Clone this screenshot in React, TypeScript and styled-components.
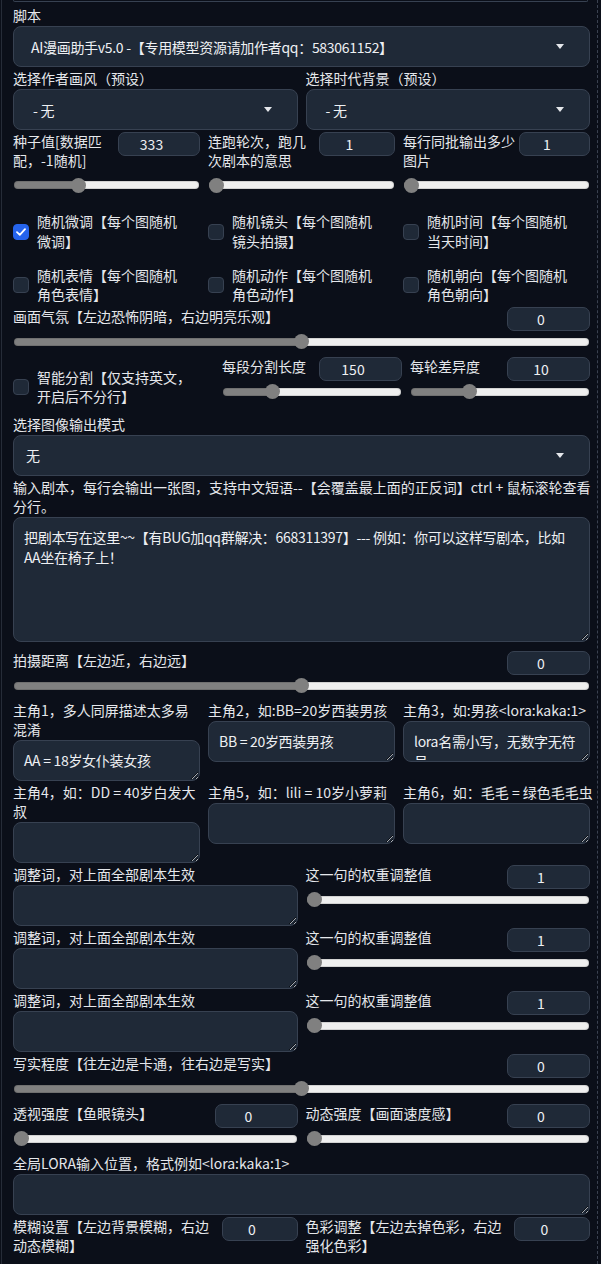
import React from "react";
import styled, { createGlobalStyle } from "styled-components";

const Global = createGlobalStyle`
  html, body { margin: 0; padding: 0; background: #0b0f19; }
  body {
    font-family: "Noto Sans CJK SC", "Noto Sans", sans-serif;
    color: #e5e7eb;
    overflow: hidden;
    font-size: 14px;
  }
  * { box-sizing: border-box; }
`;

const Page = styled.div`
  width: 597px;
  min-height: 1264px;
  margin-left: 1px;
  border-left: 1px solid #262c38;
  border-right: 1px dashed #3b4251;
  padding: 0 7px 0 11px;
  display: flex;
  flex-direction: column;
  gap: 2px;
`;

const TopEdge = styled.div`
  height: 2px;
  margin-right: 2px;
  border: 1px solid #374151;
  border-top: none;
  border-radius: 0 0 6px 6px;
`;

const Field = styled.div<{ $mt?: number }>`
  display: flex;
  flex-direction: column;
  min-width: 0;
  margin-top: ${(p) => p.$mt ?? 0}px;
`;

const Label = styled.div`
  font-size: 14px;
  line-height: 19px;
  white-space: nowrap;
  margin-bottom: 1px;
  color: #e5e7eb;
`;

const Grid = styled.div<{ $cols: string; $mt?: number }>`
  display: grid;
  grid-template-columns: ${(p) => p.$cols};
  column-gap: 8px;
  align-items: start;
  margin-top: ${(p) => p.$mt ?? 0}px;
`;

const Select = styled.div<{ $pl: number }>`
  height: 41px;
  display: flex;
  align-items: center;
  justify-content: space-between;
  padding: 0 25px 0 ${(p) => p.$pl}px;
  background: #1f2937;
  border: 1px solid #374151;
  border-radius: 8px;
  font-size: 14px;
  letter-spacing: -0.3px;
  white-space: pre;
  color: #eef0f3;
`;

const Caret = styled.span`
  width: 0;
  height: 0;
  border-left: 4px solid transparent;
  border-right: 4px solid transparent;
  border-top: 5px solid #e5e7eb;
  flex: none;
`;

const SliderHead = styled.div`
  display: flex;
  justify-content: space-between;
  align-items: flex-start;
  gap: 4px;
`;

const HeadLabel = styled.div`
  font-size: 14px;
  line-height: 19.2px;
  white-space: nowrap;
  min-width: 0;
`;

const NumberBox = styled.div<{ $w: number }>`
  flex: none;
  width: ${(p) => p.$w}px;
  height: 24px;
  background: #1f2937;
  border: 1px solid #374151;
  border-radius: 7px;
  display: flex;
  align-items: center;
  justify-content: center;
  padding: 0 15px 0 0;
  font-size: 14px;
  color: #eef0f3;
`;

const TrackArea = styled.div<{ $mt: number }>`
  height: 22px;
  margin: ${(p) => p.$mt}px 0 2px;
  display: flex;
  align-items: center;
  padding: 0 1px;
`;

const Track = styled.div<{ $pos: number }>`
  position: relative;
  flex: 1;
  height: 8px;
  border-radius: 4px;
  background: linear-gradient(
    to right,
    #808080 calc(7.5px + (100% - 15px) * ${(p) => p.$pos}),
    #efefef 0
  );
  box-shadow: inset 0 0 0 1px rgba(0, 0, 0, 0.12);
`;

const Thumb = styled.div<{ $pos: number }>`
  position: absolute;
  top: 50%;
  left: calc((100% - 15px) * ${(p) => p.$pos});
  width: 15px;
  height: 15px;
  margin-top: -7.5px;
  border-radius: 50%;
  background: #808080;
`;

const CheckItem = styled.div<{ $pt?: number }>`
  display: flex;
  align-items: center;
  gap: 8px;
  padding: ${(p) => p.$pt ?? 12}px 12px 0 0;
`;

const Box = styled.span<{ $on?: boolean }>`
  flex: none;
  width: 16px;
  height: 16px;
  border-radius: 4px;
  background: ${(p) => (p.$on ? "#2563eb" : "#1f2937")};
  border: 1px solid ${(p) => (p.$on ? "#2563eb" : "#374151")};
  display: flex;
  align-items: center;
  justify-content: center;
`;

const CheckText = styled.span`
  font-size: 14px;
  line-height: 19.6px;
  white-space: nowrap;
`;

const TextBox = styled.textarea<{ $h: number; $pr: number }>`
  display: block;
  width: 100%;
  height: ${(p) => p.$h}px;
  resize: vertical;
  overflow: hidden;
  background: #1f2937;
  border: 1px solid #374151;
  border-radius: 8px;
  color: #eef0f3;
  font-family: inherit;
  font-size: 14px;
  letter-spacing: -0.3px;
  line-height: 20px;
  padding: 9px ${(p) => p.$pr}px 9px 10px;
  margin: 0;
  color-scheme: dark;
  outline: none;
`;

type SliderProps = {
  label: React.ReactNode;
  value: string;
  pos: number;
  w?: number;
  mt?: number;
};

function SliderField({ label, value, pos, w = 83, mt = 0 }: SliderProps) {
  return (
    <Field>
      <SliderHead>
        <HeadLabel>{label}</HeadLabel>
        <NumberBox $w={w}>{value}</NumberBox>
      </SliderHead>
      <TrackArea $mt={mt}>
        <Track $pos={pos}>
          <Thumb $pos={pos} />
        </Track>
      </TrackArea>
    </Field>
  );
}

function Check({ on, children, pt }: { on?: boolean; children: React.ReactNode; pt?: number }) {
  return (
    <CheckItem $pt={pt}>
      <Box $on={on}>
        {on && (
          <svg width="10" height="8" viewBox="0 0 10 8">
            <path d="M1 4.2 L3.8 6.8 L9 1.2" fill="none" stroke="#fff" strokeWidth="1.8" strokeLinecap="round" strokeLinejoin="round" />
          </svg>
        )}
      </Box>
      <CheckText>{children}</CheckText>
    </CheckItem>
  );
}

function Dropdown({ value, pl = 13 }: { value: string; pl?: number }) {
  return (
    <Select $pl={pl}>
      <span>{value}</span>
      <Caret />
    </Select>
  );
}

function TextField({
  label,
  value = "",
  h = 41,
  pr = 4,
}: {
  label: React.ReactNode;
  value?: string;
  h?: number;
  pr?: number;
}) {
  return (
    <Field>
      <Label>{label}</Label>
      <TextBox $h={h} $pr={pr} defaultValue={value} readOnly />
    </Field>
  );
}

function WeightRow() {
  return (
    <Grid $cols="1fr 1fr">
      <TextField label="调整词，对上面全部剧本生效" />
      <SliderField label="这一句的权重调整值" value="1" pos={0} />
    </Grid>
  );
}

export default function App() {
  return (
    <>
      <Global />
      <Page>
        <TopEdge />
        <Field $mt={2}>
          <Label>脚本</Label>
          <Dropdown pl={17} value="AI漫画助手v5.0 -【专用模型资源请加作者qq：583061152】" />
        </Field>
        <Grid $cols="1fr 1fr">
          <Field>
            <Label>选择作者画风（预设）</Label>
            <Dropdown pl={19} value="- 无" />
          </Field>
          <Field>
            <Label>选择时代背景（预设）</Label>
            <Dropdown pl={19} value="- 无" />
          </Field>
        </Grid>
        <Grid $cols="1fr 1fr 1fr">
          <SliderField label={<>种子值[数据匹<br />配，-1随机]</>} value="333" pos={0.334} w={82} mt={4} />
          <SliderField label={<>连跑轮次，跑几<br />次剧本的意思</>} value="1" pos={0} w={76} mt={4} />
          <SliderField label={<>每行同批输出多少<br />图片</>} value="1" pos={0} w={71} mt={4} />
        </Grid>
        <Grid $cols="1fr 1fr 1fr">
          <Check on>随机微调【每个图随机<br />微调】</Check>
          <Check>随机镜头【每个图随机<br />镜头拍摄】</Check>
          <Check>随机时间【每个图随机<br />当天时间】</Check>
        </Grid>
        <Grid $cols="1fr 1fr 1fr">
          <Check>随机表情【每个图随机<br />角色表情】</Check>
          <Check>随机动作【每个图随机<br />角色动作】</Check>
          <Check>随机朝向【每个图随机<br />角色朝向】</Check>
        </Grid>
        <SliderField label="画面气氛【左边恐怖阴暗，右边明亮乐观】" value="0" pos={0.5} />
        <Grid $cols="201px 1fr 1fr">
          <Check pt={11}>智能分割【仅支持英文，<br />开启后不分行】</Check>
          <SliderField label="每段分割长度" value="150" pos={0.26} />
          <SliderField label="每轮差异度" value="10" pos={0.31} />
        </Grid>
        <Field $mt={6}>
          <Label>选择图像输出模式</Label>
          <Dropdown pl={12} value="无" />
        </Field>
        <TextField
          h={125}
          pr={12}
          label={<>输入剧本，每行会输出一张图，支持中文短语--【会覆盖最上面的正反词】ctrl + 鼠标滚轮查看<br />分行。</>}
          value="把剧本写在这里~~【有BUG加qq群解决：668311397】--- 例如：你可以这样写剧本，比如AA坐在椅子上！"
        />
        <Field $mt={7}>
          <SliderField label="拍摄距离【左边近，右边远】" value="0" pos={0.5} />
        </Field>
        <Grid $cols="1fr 1fr 1fr">
          <TextField label={<>主角1，多人同屏描述太多易<br />混淆</>} value="AA = 18岁女仆装女孩" />
          <TextField label="主角2，如:BB=20岁西装男孩" value="BB = 20岁西装男孩" />
          <TextField label="主角3，如:男孩<lora:kaka:1>" value="lora名需小写，无数字无符号" />
        </Grid>
        <Grid $cols="1fr 1fr 1fr">
          <TextField label={<>主角4，如：DD = 40岁白发大<br />叔</>} />
          <TextField label="主角5，如：lili = 10岁小萝莉" />
          <TextField label="主角6，如：毛毛 = 绿色毛毛虫" />
        </Grid>
        <WeightRow />
        <WeightRow />
        <WeightRow />
        <SliderField label="写实程度【往左边是卡通，往右边是写实】" value="0" pos={0.5} />
        <Grid $cols="1fr 1fr">
          <SliderField label="透视强度【鱼眼镜头】" value="0" pos={0} />
          <SliderField label="动态强度【画面速度感】" value="0" pos={0} />
        </Grid>
        <TextField label="全局LORA输入位置，格式例如<lora:kaka:1>" />
        <Grid $cols="1fr 1fr">
          <SliderHead>
            <HeadLabel>模糊设置【左边背景模糊，右边<br />动态模糊】</HeadLabel>
            <NumberBox $w={76}>0</NumberBox>
          </SliderHead>
          <SliderHead>
            <HeadLabel>色彩调整【左边去掉色彩，右边<br />强化色彩】</HeadLabel>
            <NumberBox $w={76}>0</NumberBox>
          </SliderHead>
        </Grid>
      </Page>
    </>
  );
}
